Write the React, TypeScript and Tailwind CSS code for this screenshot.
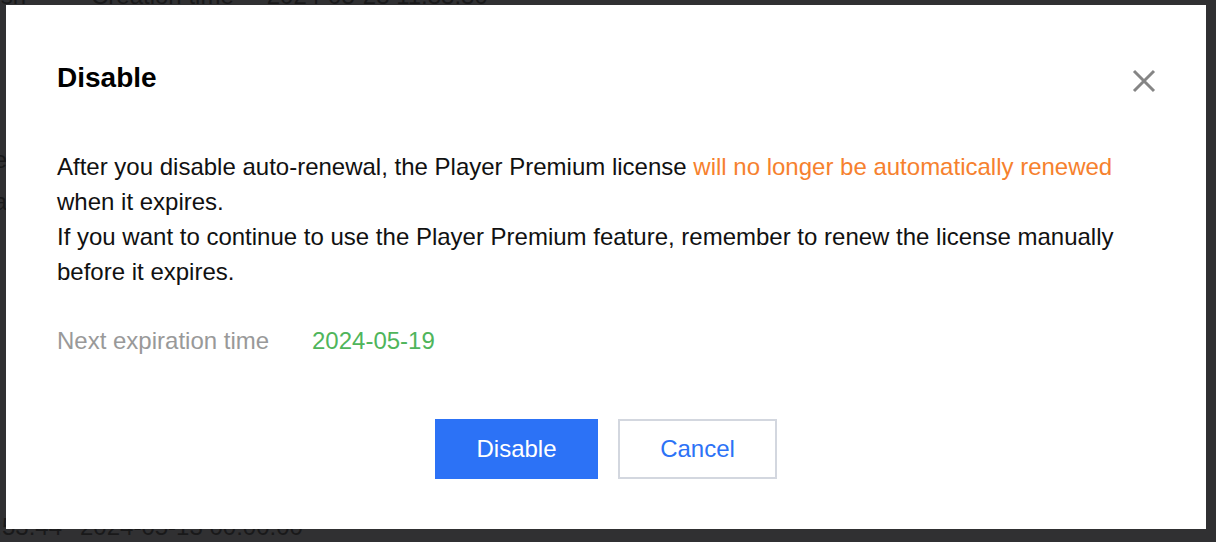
import React from "react";

const font = { fontFamily: '"Liberation Sans", Arial, Helvetica, sans-serif' };

const App: React.FC = () => {
  return (
    <div
      className="relative w-[1216px] h-[542px] overflow-hidden bg-[#303032] text-[24px] leading-[36px] text-[#19191a]"
      style={font}
    >
      {/* page behind the mask */}
      <div className="flex flex-col">
        <div className="flex mt-[-22px] h-[36px] whitespace-nowrap">
          <div className="w-[26px] flex justify-end">Name sn</div>
          <div className="ml-[65px]">Creation time</div>
          <div className="ml-[33px]">2024-05-23 11:33:30</div>
        </div>
        <div className="h-[128px]" />
        <div className="w-[7px] flex justify-end whitespace-nowrap h-[42px]">License</div>
        <div className="w-[7px] flex justify-end whitespace-nowrap h-[36px]">Premium a</div>
        <div className="h-[289px]" />
        <div className="flex whitespace-nowrap">
          <div className="w-[62px] flex justify-end">10:53:44</div>
          <div className="ml-[18px]">2024-05-13 00:00:00</div>
        </div>
      </div>

      {/* dialog */}
      <div className="absolute left-[6px] top-[5px] w-[1200px] h-[524px] bg-white pl-[51px] pr-[51px]">
        <h2 className="pt-[55px] text-[28px] leading-[36px] font-bold text-black">Disable</h2>

        <button className="absolute right-[50px] top-[64px] w-[24px] h-[24px]">
          <svg width="24" height="24" viewBox="0 0 24 24" fill="none">
            <path d="M2 2L22 22M22 2L2 22" stroke="#858585" strokeWidth="3" />
          </svg>
        </button>

        <div className="mt-[53px] text-[#111] leading-[35px]">
          <p>
            After you disable auto-renewal, the Player Premium license{" "}
            <span className="text-[#f6812e]">will no longer be automatically renewed</span> when it
            expires.
          </p>
          <p>
            If you want to continue to use the Player Premium feature, remember to renew the license
            manually before it expires.
          </p>
        </div>

        <div className="mt-[34px] flex leading-[35px]">
          <div className="w-[255px] text-[#999]">Next expiration time</div>
          <div className="text-[#4fb55b]">2024-05-19</div>
        </div>

        <div className="mt-[61px] flex justify-center gap-[20px]">
          <button className="w-[163px] h-[60px] bg-[#2c72f6] text-white text-[24px]">Disable</button>
          <button className="w-[159px] h-[60px] border-2 border-[#d3d7df] bg-white text-[#2c72f6] text-[24px]">
            Cancel
          </button>
        </div>
      </div>
    </div>
  );
};

export default App;
